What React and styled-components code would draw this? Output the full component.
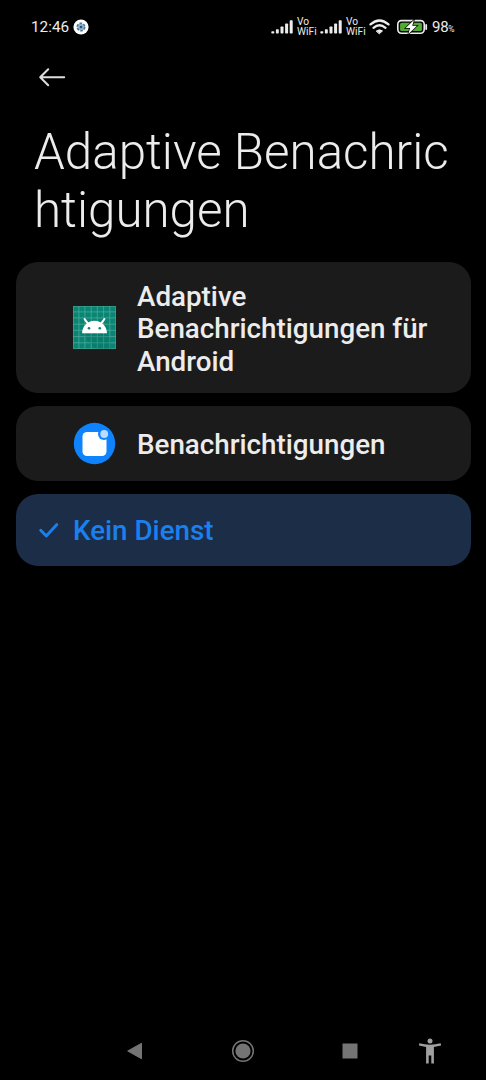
import React from "react";
import styled, { createGlobalStyle } from "styled-components";

const GlobalStyle = createGlobalStyle`
  * { box-sizing: border-box; }
  html, body { margin: 0; background: #000; }
  body { font-family: Roboto, "Liberation Sans", sans-serif; color: #ececec; }
  svg { display: block; flex: none; }
`;

const Screen = styled.div`
  width: 486px;
  height: 1080px;
  background: #000;
  display: flex;
  flex-direction: column;
  overflow: hidden;
`;

const StatusBar = styled.header`
  height: 54px;
  padding: 0 30px 0 31px;
  display: flex;
  align-items: center;
  justify-content: space-between;
`;

const StatusGroup = styled.div`
  display: flex;
  align-items: center;
`;

const Clock = styled.span`
  width: 42px;
  font-size: 15.3px;
  font-weight: 400;
  line-height: 18px;
`;

const Carrier = styled.div`
  display: flex;
  align-items: center;
  gap: 4px;
  width: 49px;
`;

const VoWifi = styled.span`
  display: flex;
  flex-direction: column;
  font-size: 10.2px;
  line-height: 10px;
  font-weight: 400;
  color: #ececec;
`;

const Indicators = styled.div`
  display: flex;
  align-items: center;
  gap: 7px;
`;

const Charge = styled.span`
  display: flex;
  align-items: baseline;
  width: 24px;
  margin-left: 4px;
  padding-top: 1px;
  font-size: 15px;
  line-height: 18px;
  font-weight: 400;
  letter-spacing: -0.3px;
`;

const Percent = styled.small`
  font-size: 8.5px;
`;

const BackButton = styled.button`
  width: 44px;
  height: 46px;
  margin: 0 0 0 30px;
  padding: 0;
  border: 0;
  background: none;
  display: flex;
  align-items: center;
  justify-content: center;
`;

const Title = styled.h1`
  margin: 23px 0 0 34px;
  font-size: 49.3px;
  line-height: 58px;
  font-weight: 300;
`;

const TitleLine = styled.span`
  display: block;
  white-space: nowrap;
`;

const List = styled.ul`
  list-style: none;
  margin: 22.5px 15px 0 16px;
  padding: 0;
  display: flex;
  flex-direction: column;
  gap: 12.8px;
`;

const Card = styled.li`
  height: ${(p) => p.$height}px;
  padding-left: ${(p) => (p.$selected ? 22 : 57)}px;
  border-radius: 22px;
  background: ${(p) => (p.$selected ? "#1b2d47" : "#1b1b1b")};
  color: ${(p) => (p.$selected ? "#1a80f0" : "#ececec")};
  display: flex;
  align-items: center;
  gap: ${(p) => (p.$selected ? 13 : 21)}px;
`;

const Label = styled.span`
  width: 310px;
  font-size: 27.75px;
  line-height: 32.8px;
  font-weight: 500;
  padding-top: ${(p) => (p.$multiline ? 5 : 3.6)}px;
`;

const NavBar = styled.nav`
  margin-top: auto;
  height: 58px;
  padding-left: 80px;
  display: grid;
  grid-template-columns: 108px 110px 103px 57px;
  align-items: center;
  justify-items: center;
`;

const Gear = () => (
  <svg width="16" height="16" viewBox="0 0 16 16">
    <circle cx="8" cy="8" r="7.6" fill="#fff" />
    <circle cx="8" cy="8" r="3.6" fill="#8ab4d6" />
    <circle cx="8" cy="8" r="3.8" fill="none" stroke="#55738a" strokeWidth="1.5" strokeDasharray="2.6 1.38" />
    <circle cx="8" cy="8" r="1.3" fill="#35536b" />
  </svg>
);

const Signal = () => (
  <svg width="22" height="14" viewBox="0 0 22 14" fill="#ececec">
    <rect x="0.3" y="11.2" width="3" height="2.3" rx="0.7" />
    <rect x="4.9" y="9.2" width="2.9" height="4.3" rx="0.7" />
    <rect x="9.5" y="6.5" width="3" height="7" rx="0.7" />
    <rect x="14.1" y="3.6" width="3" height="9.9" rx="0.7" />
    <rect x="18.7" y="0.3" width="3" height="13.2" rx="0.7" />
  </svg>
);

const Wifi = () => (
  <svg width="21" height="16" viewBox="0 0 21 16" fill="none" stroke="#ececec" strokeWidth="2.3" strokeLinecap="round">
    <path d="M1.5 5.4Q10.5-2.4 19.5 5.4M4.5 8.8Q10.5 3.6 16.5 8.8" />
    <path d="M7.5 11.9Q10.5 9.6 13.5 11.9L10.5 14.6z" fill="#ececec" strokeWidth="1" strokeLinejoin="round" />
  </svg>
);

const Battery = () => (
  <svg width="31" height="16" viewBox="0 0 31 16">
    <rect x="0.8" y="1.6" width="26.4" height="12.6" rx="3.6" fill="none" stroke="#ececec" strokeWidth="1.6" />
    <rect x="3.1" y="3.8" width="21.8" height="8.2" rx="1.5" fill="#4fae31" />
    <path d="M29.2 6v4" stroke="#ececec" strokeWidth="1.8" strokeLinecap="round" />
    <path d="M17 .9 8.6 9h4.5l-1.9 6.3 8.8-8.5h-4.8z" fill="#fff" stroke="#000" strokeWidth="1.4" paintOrder="stroke" />
  </svg>
);

const BackArrow = () => (
  <svg width="28" height="20" viewBox="0 0 28 20" fill="none" stroke="#dedede" strokeWidth="2" strokeLinecap="round" strokeLinejoin="round">
    <path d="M26.200 10.200H2.200M10.200 2.200l-8 8 8 8" />
  </svg>
);

const gridLines = [5.9, 11.9, 18.2, 24.3, 30.6, 36.8];

const AndroidIcon = () => (
  <svg width="43" height="43" viewBox="0 0 43 43">
    <rect width="43" height="43" fill="#088573" />
    {gridLines.map((n) => (
      <path key={n} d={`M${n} 0V43M0 ${n}H43`} stroke="#58ad9f" strokeWidth="0.7" />
    ))}
    <path d="M.3 .3h42.4v42.4H.3z" fill="none" stroke="#58ad9f" strokeWidth="0.6" />
    <path d="M9.3 28H34l4 4v11H23z" fill="#04685b" opacity="0.25" />
    <path d="m11.6 13.1 3.4 4.5M31.4 13.1l-3.4 4.5" stroke="#fff" strokeWidth="1.9" strokeLinecap="round" />
    <path d="M9 27.300c.4-7.600 5.700-12.500 12.500-12.500S33.600 19.700 34 27.300z" fill="#fff" />
    <circle cx="16" cy="22.2" r="1.3" fill="#088573" />
    <circle cx="26.8" cy="22.2" r="1.3" fill="#088573" />
  </svg>
);

const NotificationIcon = () => (
  <svg width="43" height="43" viewBox="0 0 43 43">
    <circle cx="21.5" cy="21.5" r="20.7" fill="#0f83fe" />
    <rect x="9.5" y="10" width="24" height="24" rx="4.5" fill="#fff" />
    <circle cx="31" cy="12" r="6" fill="#0f83fe" />
    <circle cx="31.2" cy="12" r="3.9" fill="#b9dcff" />
  </svg>
);

const Check = () => (
  <svg width="22" height="18" viewBox="0 0 22 18" fill="none" stroke="#1a80f0" strokeWidth="2.9" strokeLinecap="round" strokeLinejoin="round">
    <path d="m2.7 9.3 5.6 5.7L18.800 3.500" />
  </svg>
);

const NavBack = () => (
  <svg width="17" height="18" viewBox="0 0 17 18">
    <path d="M1.7 9 15.5 1.3v15.4z" fill="#747474" stroke="#747474" strokeWidth="1" strokeLinejoin="round" />
  </svg>
);

const NavHome = () => (
  <svg width="24" height="24" viewBox="0 0 24 24">
    <circle cx="12" cy="12" r="10.3" fill="none" stroke="#747474" strokeWidth="1.5" />
    <circle cx="12" cy="12" r="7.6" fill="#747474" />
  </svg>
);

const NavRecents = () => (
  <svg width="16" height="16" viewBox="0 0 16 16">
    <rect x="0.5" y="0.5" width="15" height="15" fill="#747474" />
  </svg>
);

const Accessibility = () => (
  <svg width="24" height="26" viewBox="0 0 24 26" fill="#a0a0a0">
    <circle cx="12" cy="2.9" r="2.5" />
    <path d="M1.3 5.3Q12 8.1 22.7 5.3l.4 2.1-7.2 1.6v16.4h-2.6v-7.8h-2.6v7.8H8.1V9L.9 7.4z" />
  </svg>
);

const services = [
  { label: "Adaptive Benachrichtigungen für Android", Icon: AndroidIcon, height: 131.5, multiline: true },
  { label: "Benachrichtigungen", Icon: NotificationIcon, height: 75.4 },
  { label: "Kein Dienst", Icon: Check, height: 72, selected: true },
];

export default function App() {
  return (
    <Screen>
      <GlobalStyle />
      <StatusBar>
        <StatusGroup>
          <Clock>12:46</Clock>
          <Gear />
        </StatusGroup>
        <StatusGroup>
          {[1, 2].map((sim) => (
            <Carrier key={sim}>
              <Signal />
              <VoWifi>
                <span>Vo</span>
                <span>WiFi</span>
              </VoWifi>
            </Carrier>
          ))}
          <Indicators>
            <Wifi />
            <Battery />
          </Indicators>
          <Charge>
            98<Percent>%</Percent>
          </Charge>
        </StatusGroup>
      </StatusBar>
      <BackButton aria-label="Zurück">
        <BackArrow />
      </BackButton>
      <Title>
        <TitleLine>Adaptive Benachric</TitleLine>
        <TitleLine>htigungen</TitleLine>
      </Title>
      <List>
        {services.map(({ label, Icon, height, selected, multiline }) => (
          <Card key={label} $height={height} $selected={selected}>
            <Icon />
            <Label $multiline={multiline}>{label}</Label>
          </Card>
        ))}
      </List>
      <NavBar>
        <NavBack />
        <NavHome />
        <NavRecents />
        <Accessibility />
      </NavBar>
    </Screen>
  );
}
